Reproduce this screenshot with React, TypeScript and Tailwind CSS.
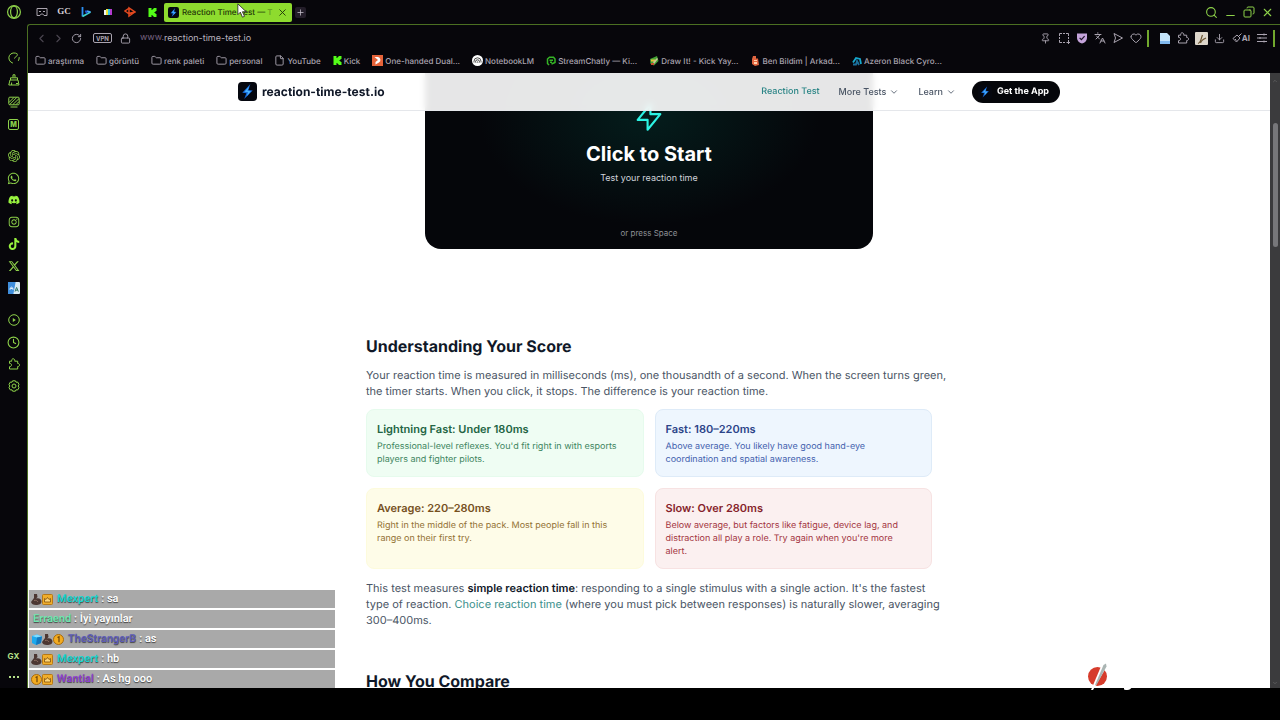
import type { ReactNode } from "react";
import {
  ChevronDown,
  ChevronLeft,
  ChevronRight,
  Clock,
  Copy,
  Download,
  File,
  Folder,
  Heart,
  Languages,
  Lock,
  Minus,
  Pin,
  Plus,
  RotateCw,
  Search,
  X,
} from "lucide-react";
import { FaDiscord, FaTiktok, FaWhatsapp, FaXTwitter, FaInstagram } from "react-icons/fa6";
import { SiKick, SiOpenai } from "react-icons/si";

function BoltLogo({ className }: { className: string }) {
  return (
    <svg viewBox="0 0 20 20" className={className} aria-hidden="true">
      <rect width="20" height="20" rx="4" fill="#05070f" />
      <path d="M13 2 4.5 11.2l4.300.6L6.500 18 15.500 9l-4.500-.7z" fill="#1668d8" />
      <path d="M11.8 4.6 6.800 10.2l3.800.6-1.600 4.400L13.600 9.800l-3.600-.5z" fill="#49b4ff" />
    </svg>
  );
}

function OperaIcon() {
  return (
    <svg viewBox="0 0 16 16" className="size-4" fill="none" stroke="#8ed24a" aria-hidden="true">
      <circle cx="8" cy="8" r="6.4" strokeWidth="1.2" />
      <ellipse cx="8" cy="8" rx="3.4" ry="5.8" strokeWidth="1.2" />
    </svg>
  );
}

function GaugeIcon() {
  return (
    <svg viewBox="0 0 12 12" className="size-3" fill="none" stroke="currentColor" strokeLinecap="round" aria-hidden="true">
      <path d="M4.500 11A5.200 5.200 0 1 1 9.300 2M11.200 5.500A5.200 5.200 0 0 1 10.500 8.500M6.400 6.200 9.600 3" />
    </svg>
  );
}

function CleanerIcon() {
  return (
    <svg viewBox="0 0 12 12" className="size-3" fill="none" stroke="currentColor" aria-hidden="true">
      <path d="M5 3.5V.8h2v2.7M2.5 6V3.8h7V6M2 6h8l1 5H.8zM3.600 8.500V11M8 9.500h2" />
    </svg>
  );
}

function WallpaperIcon() {
  return (
    <svg viewBox="0 0 12 12" className="size-3" fill="none" stroke="currentColor" aria-hidden="true">
      <rect x=".8" y="1.2" width="10.4" height="7.6" rx="1" />
      <path d="M1 6.5 6 1.4M1.6 8.6 8.8 1.4M4.8 8.6l6.2-6M8 8.6l3-3M2.500 11h7" />
    </svg>
  );
}

function ModsIcon() {
  return (
    <span className="flex size-[11px] items-center justify-center rounded-[2px] border border-[#8ed24a] text-[7px] leading-none font-extrabold">
      M
    </span>
  );
}

function TranslateTile() {
  return (
    <svg viewBox="0 0 12 12" className="size-3" aria-hidden="true">
      <rect width="12" height="12" rx="1" fill="#d8ebf4" />
      <path d="M0 0h7.6L5.4 12H0z" fill="#3f8edc" />
      <path d="M2 7.8c0-3.6 3-3.6 3 0M2.3 6.5h2.5" stroke="#e6f3ff" fill="none" />
      <path d="m7 9.6 1.6-4.2 1.8 4.2M7.6 8.2h2.2" stroke="#36786c" fill="none" />
    </svg>
  );
}

function PlayerIcon() {
  return (
    <svg viewBox="0 0 12 12" className="size-3" fill="none" stroke="currentColor" aria-hidden="true">
      <circle cx="6" cy="6" r="5.3" />
      <path d="M4.8 4v4l3-2z" fill="currentColor" stroke="none" />
    </svg>
  );
}

function PuzzleIcon() {
  return (
    <svg viewBox="0 0 12 12" className="size-3" fill="none" stroke="currentColor" strokeLinejoin="round" aria-hidden="true">
      <path d="M1.500 3.200h2.300C3.400 1.800 4 .8 5.200.8s1.900 1 1.500 2.400h3v2.300c1.200 0 1.900.6 1.900 1.500s-.7 1.500-1.900 1.500V11H1.500V8.700c1.300 0 2-.7 2-1.700s-.7-1.600-2-1.600z" />
    </svg>
  );
}

function SettingsIcon() {
  return (
    <svg viewBox="0 0 12 12" className="size-3" fill="none" stroke="currentColor" strokeLinejoin="round" aria-hidden="true">
      <path d="M4.6.8h2.8l.6 1.4 1.6-.2 1.4 2.3L10.2 6l.8 1.7L9.6 10 8 9.8l-.6 1.4H4.6L4 9.8 2.4 10 1 7.7 1.8 6 1 4.3 2.4 2l1.6.2z" />
      <circle cx="6" cy="6" r="2" />
    </svg>
  );
}

const sidebarGroups: { label: string; icon: ReactNode }[][] = [
  [
    { label: "GX Control", icon: <GaugeIcon /> },
    { label: "GX Cleaner", icon: <CleanerIcon /> },
    { label: "Live wallpapers", icon: <WallpaperIcon /> },
    { label: "Mods", icon: <ModsIcon /> },
  ],
  [
    { label: "ChatGPT", icon: <SiOpenai className="size-3" /> },
    { label: "WhatsApp", icon: <FaWhatsapp className="size-[13px]" /> },
    { label: "Discord", icon: <FaDiscord className="size-3 text-[#98f23f]" /> },
    { label: "Instagram", icon: <FaInstagram className="size-3" /> },
    { label: "TikTok", icon: <FaTiktok className="size-3 text-[#98f23f]" /> },
    { label: "X", icon: <FaXTwitter className="size-3" /> },
    { label: "Translate", icon: <TranslateTile /> },
  ],
  [
    { label: "Player", icon: <PlayerIcon /> },
    { label: "History", icon: <Clock className="size-[13px]" /> },
    { label: "Extensions", icon: <PuzzleIcon /> },
    { label: "Settings", icon: <SettingsIcon /> },
  ],
];

function SideBar() {
  return (
    <aside className="flex w-[27px] shrink-0 flex-col text-[#8ed24a]">
      <button aria-label="Opera menu" className="mb-[23px] flex h-6 items-center justify-center">
        <OperaIcon />
      </button>
      <nav className="flex flex-col gap-[10px]">
        {sidebarGroups.map((group, i) => (
          <div key={i} className="flex flex-col">
            {group.map(({ label, icon }) => (
              <button key={label} aria-label={label} className="flex h-[22px] items-center justify-center">
                {icon}
              </button>
            ))}
          </div>
        ))}
      </nav>
      <div className="mt-auto flex flex-col text-[#b5e08a]">
        <button className="h-5 text-[8px] font-bold">GX</button>
        <button aria-label="More" className="flex h-[22px] items-center justify-center gap-[2px]">
          <span className="size-[2px] bg-current" />
          <span className="size-[2px] bg-current" />
          <span className="size-[2px] bg-current" />
        </button>
      </div>
    </aside>
  );
}

const pinnedTabs: { label: string; icon: ReactNode }[] = [
  {
    label: "GX Corner",
    icon: (
      <svg viewBox="0 0 12 10" className="h-[10px] w-3" fill="none" stroke="#a9a3ad" aria-hidden="true">
        <path d="M1 1.5h10v7H8L6.8 7H5.2L4 8.5H1zM3 4.5h2M7 4.5h2" />
      </svg>
    ),
  },
  { label: "GC", icon: <span className="font-['Liberation_Serif',serif] text-[9px] font-bold text-[#d6d2d8]">GC</span> },
  {
    label: "Play",
    icon: (
      <svg viewBox="0 0 12 12" className="size-3" fill="none" strokeWidth="1.800" aria-hidden="true">
        <path d="M2.500 1v9.500" stroke="#2c8ff2" />
        <path d="M2.500 10.500 10.500 6" stroke="#3dd2c5" />
        <path d="m5.500 4.500 1.500 3" stroke="#2454d0" />
        <path d="m7 5 3.500 1" stroke="#43a5ff" />
      </svg>
    ),
  },
  {
    label: "Stripes",
    icon: (
      <svg viewBox="0 0 8 6" className="h-[6px] w-2" aria-hidden="true">
        <path d="M0 1h2v5H0z" fill="#f2f2f2" />
        <path d="M2 0h2v6H2z" fill="#ece33a" />
        <path d="M4 0h2v6H4z" fill="#33c7e8" />
        <path d="M6 0h2v6H6z" fill="#b43ad0" />
      </svg>
    ),
  },
  {
    label: "Radio",
    icon: (
      <svg viewBox="0 0 12 12" className="size-3" fill="none" stroke="#e2481f" strokeWidth="1.500" aria-hidden="true">
        <path d="M4.500 2.500 1 5l3.500 2.500L11 6 5 2v8l6-4" />
      </svg>
    ),
  },
  { label: "Kick", icon: <SiKick className="size-[9px] text-[#53fc18]" /> },
];

function TabBar() {
  return (
    <div className="flex h-6 items-center pl-1">
      {pinnedTabs.map(({ label, icon }) => (
        <button key={label} aria-label={label} className="flex w-[22px] items-center justify-center">
          {icon}
        </button>
      ))}
      <div className="ml-[1px] flex h-[19px] w-32 items-center rounded-[2px] bg-[#8edb2e] px-1 text-[#1f3508]">
        <BoltLogo className="size-[11px] shrink-0" />
        <span className="ml-[3px] text-[8px] font-medium whitespace-nowrap">
          Reaction Time Test — <span className="opacity-40">T</span>
        </span>
        <button aria-label="Close tab" className="ml-auto">
          <X className="size-[11px]" />
        </button>
      </div>
      <button aria-label="New tab" className="ml-[3px] flex size-[11px] items-center justify-center rounded-[2px] bg-[#231d29] text-[#c9c3cf]">
        <Plus className="size-[9px]" />
      </button>
      <div className="ml-auto flex items-center gap-[6px] pr-[6px] text-[#8ed24a]">
        <button aria-label="Search tabs"><Search className="size-[13px]" /></button>
        <button aria-label="Minimize" className="pt-[7px]"><Minus className="size-[13px]" /></button>
        <button aria-label="Restore"><Copy className="size-3 -scale-x-100" /></button>
        <button aria-label="Close window"><X className="size-[13px]" /></button>
      </div>
    </div>
  );
}

function ShieldIcon() {
  return (
    <svg viewBox="0 0 12 12" className="size-3" aria-hidden="true">
      <path d="M1 1.5h10V6c0 2.6-2 4.6-5 5.6C3 10.600 1 8.600 1 6z" fill="#c4a3da" />
      <path d="m3.600 5.800 1.800 1.800 3.200-3.400" fill="none" stroke="#1c1226" strokeWidth="1.200" />
    </svg>
  );
}

function SnapshotIcon() {
  return (
    <svg viewBox="0 0 12 12" className="size-3" fill="none" stroke="currentColor" aria-hidden="true">
      <path d="M1.500 4V1.500H4M5 1.500h2M8 1.500h2.500V4M1.500 5v2M1.500 8v2.500H4M5 10.500h2M10.500 5v2M10.500 8v4M8.500 10.500H12" />
    </svg>
  );
}

function SendIcon() {
  return (
    <svg viewBox="0 0 12 12" className="size-3" fill="none" stroke="currentColor" strokeLinejoin="round" aria-hidden="true">
      <path d="m2 1.500 8.500 4.500L2 10.500 3.500 6z" />
    </svg>
  );
}

const toolbarActions: { label: string; icon: ReactNode }[] = [
  { label: "Pin", icon: <Pin className="size-[11px]" /> },
  { label: "Snapshot", icon: <SnapshotIcon /> },
  { label: "Ad blocker", icon: <ShieldIcon /> },
  { label: "Translate", icon: <Languages className="size-3" /> },
  { label: "Send to Flow", icon: <SendIcon /> },
  { label: "Bookmark", icon: <Heart className="size-3" /> },
];

const extensionActions: { label: string; icon: ReactNode; width: string }[] = [
  {
    label: "Docs",
    width: "w-[18px]",
    icon: (
      <svg viewBox="0 0 10 11" className="h-[11px] w-[10px]" aria-hidden="true">
        <path d="M0 0h7l3 3v8H0z" fill="#c4e4fa" />
        <path d="M0 8h10v3H0z" fill="#80b9ee" />
      </svg>
    ),
  },
  { label: "Extensions", width: "w-[18px]", icon: <PuzzleIcon /> },
  {
    label: "Profile",
    width: "w-[19px]",
    icon: (
      <svg viewBox="0 0 13 13" className="size-[13px]" aria-hidden="true">
        <rect width="13" height="13" rx="1" fill="#ddd6cb" />
        <path d="M3 11.500c3-1 3-5 4.500-8.500M5.500 11c1-3 3-4 5.500-5" fill="none" stroke="#6a5431" strokeWidth="1.200" />
      </svg>
    ),
  },
  { label: "Downloads", width: "w-[18px]", icon: <Download className="size-[11px]" /> },
];

function AddressBar() {
  return (
    <div className="flex h-[26px] items-center pl-[7px] text-[#aaa4b0]">
      <button aria-label="Back" className="text-[#4b4650]"><ChevronLeft className="size-[13px]" /></button>
      <button aria-label="Forward" className="ml-1 text-[#4b4650]"><ChevronRight className="size-[13px]" /></button>
      <button aria-label="Reload" className="ml-[6px]"><RotateCw className="size-[11px]" /></button>
      <button className="ml-[11px] flex h-[10px] items-center rounded-[2px] border border-current px-[2px] text-[6px] font-bold">
        VPN
      </button>
      <button aria-label="Site information" className="ml-[8px]"><Lock className="size-[11px]" /></button>
      <label className="ml-[9px] flex flex-1 items-center text-[9px]">
        <span className="text-[#75617f]">www.</span>
        <input
          aria-label="Address"
          defaultValue="reaction-time-test.io"
          className="w-full bg-transparent text-[#b9b3bf] outline-none"
        />
      </label>
      <div className="flex items-center">
        {toolbarActions.map(({ label, icon }) => (
          <button key={label} aria-label={label} className="flex w-[18px] items-center justify-center">
            {icon}
          </button>
        ))}
        <span className="mr-[7px] ml-[2px] h-[17px] w-[2px] bg-[#71a82e]" />
        {extensionActions.map(({ label, icon, width }) => (
          <button key={label} aria-label={label} className={`flex items-center justify-center ${width}`}>
            {icon}
          </button>
        ))}
        <button className="ml-[3px] flex items-center text-[8px] font-bold">
          <svg viewBox="0 0 10 10" className="size-[10px]" fill="none" stroke="currentColor" aria-hidden="true">
            <path d="M1 5.500 5 2l3 3-3.500 4zM6.500 3.500l3-3M3 6l1.500 1.500" />
          </svg>
          AI
        </button>
        <button aria-label="Easy setup" className="ml-[7px]">
          <svg viewBox="0 0 10 10" className="size-[10px]" fill="none" stroke="currentColor" aria-hidden="true">
            <path d="M0 1.500h10M0 5h10M0 8.500h10M7 .500v2M3 4v2M7 7.500v2" />
          </svg>
        </button>
        <span className="mr-[5px] ml-[6px] h-[17px] w-[2px] bg-[#71a82e]" />
      </div>
    </div>
  );
}

const folder = <Folder className="size-[11px]" />;

const bookmarks: { label: string; icon: ReactNode }[] = [
  { label: "araştırma", icon: folder },
  { label: "görüntü", icon: folder },
  { label: "renk paleti", icon: folder },
  { label: "personal", icon: folder },
  { label: "YouTube", icon: <File className="size-[11px]" /> },
  { label: "Kick", icon: <SiKick className="size-[9px] text-[#53fc18]" /> },
  {
    label: "One-handed Dual...",
    icon: (
      <svg viewBox="0 0 11 11" className="size-[11px]" aria-hidden="true">
        <rect width="11" height="11" fill="#e5633a" />
        <path d="M2.500 2H6a3 3 0 0 1 1 5.500L3.500 9.500V7L6 5z" fill="#fff" />
      </svg>
    ),
  },
  {
    label: "NotebookLM",
    icon: (
      <svg viewBox="0 0 11 11" className="size-[11px]" fill="none" stroke="#222" strokeWidth=".800" aria-hidden="true">
        <circle cx="5.500" cy="5.500" r="5.500" fill="#fff" stroke="none" />
        <path d="M2 7.500V6.300a3.500 3.500 0 0 1 7 0v1.200M3.500 7.500V6.800a2 2 0 0 1 4 0v.7M5 7.500c0-1 1-1 1 0" />
      </svg>
    ),
  },
  {
    label: "StreamChatly — Ki...",
    icon: (
      <svg viewBox="0 0 10 10" className="size-[10px]" fill="none" stroke="#35b526" strokeWidth="1.500" aria-hidden="true">
        <path d="M3 9 1.500 7.500V3L3.500 1.200h4L9 3v3.500L5.500 8M3.500 4.200h3.500M4 6.200h2" />
      </svg>
    ),
  },
  {
    label: "Draw It! - Kick Yay...",
    icon: (
      <svg viewBox="0 0 10 10" className="size-[10px]" aria-hidden="true">
        <path d="M1 3 8 0l1.500 5L5 9.500 1.500 8z" fill="#43a233" />
        <path d="M2 3.500h4v2H2z" fill="#e5c33a" />
        <path d="m4 6 4-4 1 1-4 5z" fill="#c9c59a" />
        <path d="M2 7h3v2H2z" fill="#c65030" />
      </svg>
    ),
  },
  {
    label: "Ben Bildim | Arkad...",
    icon: (
      <svg viewBox="0 0 10 10" className="size-[10px]" aria-hidden="true">
        <path d="M3 0h3v2.500h2L9 9 5 10 2 8V3z" fill="#e06540" />
        <path d="M4 4h3v1H4zM4 6h3v2H4z" fill="#ffd2ae" />
      </svg>
    ),
  },
  {
    label: "Azeron Black Cyro...",
    icon: (
      <svg viewBox="0 0 10 10" className="size-[10px]" fill="none" strokeWidth="1.800" aria-hidden="true">
        <path d="M1 6.500 4 2l4 1 1 5" stroke="#16a7cc" />
        <path d="M1 8.500h3L5 5l2 4" stroke="#1c6f9c" />
      </svg>
    ),
  },
];

function BookmarksBar() {
  return (
    <nav aria-label="Bookmarks" className="flex h-[22px] items-center gap-3 pb-[3px] pl-[7px] text-[8px] font-medium text-[#aaa4b0]">
      {bookmarks.map(({ label, icon }) => (
        <a key={label} href="#" className="flex items-center gap-[2px] whitespace-nowrap">
          {icon}
          {label}
        </a>
      ))}
    </nav>
  );
}

function SiteHeader() {
  return (
    <header className="sticky top-0 z-10 -mb-[38px] border-b border-gray-200 bg-white/90 backdrop-blur-[3px]">
      <div className="mx-auto flex h-[37px] max-w-[822px] items-center justify-between">
        <a href="#" className="flex items-center gap-[5px] text-[12px] font-bold text-gray-900">
          <BoltLogo className="size-[19px]" />
          reaction-time-test.io
        </a>
        <nav className="flex items-center text-[9px] font-medium text-gray-600">
          <a href="#" className="text-[#2a8586]">Reaction Test</a>
          <button className="ml-[19px] flex items-center gap-[3px]">
            More Tests <ChevronDown className="size-[10px]" />
          </button>
          <button className="ml-[19px] flex items-center gap-[3px]">
            Learn <ChevronDown className="size-[10px]" />
          </button>
          <a href="#" className="ml-4 flex h-[22px] items-center gap-[5px] rounded-full bg-[#05060a] pr-[11px] pl-[6px] font-bold text-white">
            <BoltLogo className="size-[14px]" />
            Get the App
          </a>
        </nav>
      </div>
    </header>
  );
}

function StartPanel() {
  return (
    <button className="mx-auto -mt-10 flex h-[216px] w-full max-w-[448px] shrink-0 flex-col items-center rounded-2xl bg-[#05060a] bg-[radial-gradient(ellipse_170px_110px_at_50%_38%,#041d1c,transparent)] pt-[67px]">
      <svg viewBox="0 0 24 24" className="size-[34px] shrink-0" fill="none" stroke="#2cf3e3" strokeWidth="1.500" strokeLinejoin="round" aria-hidden="true">
        <path d="M13 10V3L4 14h7v7l9-11h-7z" />
      </svg>
      <span className="mt-[6px] text-[20px] leading-7 font-bold text-white">Click to Start</span>
      <span className="mt-[3px] text-[9px] leading-[14px] text-gray-300">Test your reaction time</span>
      <span className="mt-auto mb-[10px] text-[8px] leading-3 text-[#8d9095]">or press Space</span>
    </button>
  );
}

const scores = [
  {
    title: "Lightning Fast: Under 180ms",
    text: "Professional-level reflexes. You'd fit right in with esports players and fighter pilots.",
    box: "border-[#e6fbed] bg-[#effdf3]",
    titleColor: "text-[#236544]",
    textColor: "text-[#3d8560]",
  },
  {
    title: "Fast: 180–220ms",
    text: "Above average. You likely have good hand-eye coordination and spatial awareness.",
    box: "border-[#deebf8] bg-[#eef6fe]",
    titleColor: "text-[#2c4489]",
    textColor: "text-[#4462ae]",
  },
  {
    title: "Average: 220–280ms",
    text: "Right in the middle of the pack. Most people fall in this range on their first try.",
    box: "border-[#fdfbdc] bg-[#fefce8]",
    titleColor: "text-[#76501e]",
    textColor: "text-[#937234]",
  },
  {
    title: "Slow: Over 280ms",
    text: "Below average, but factors like fatigue, device lag, and distraction all play a role. Try again when you're more alert.",
    box: "border-[#f7e2e2] bg-[#fbf0f0]",
    titleColor: "text-[#861f2b]",
    textColor: "text-[#a33541]",
  },
];

function Article() {
  return (
    <article className="mx-auto mt-[85px] w-full max-w-[566px] shrink-0 text-[11px] leading-4 text-gray-600">
      <h2 className="text-[16px] leading-6 font-bold text-gray-900">Understanding Your Score</h2>
      <p className="-mr-4 mt-[9px]">
        Your reaction time is measured in milliseconds (ms), one thousandth of a second. When the screen turns green,
        the timer starts. When you click, it stops. The difference is your reaction time.
      </p>
      <div className="mt-[10px] grid grid-cols-2 gap-[11px]">
        {scores.map(({ title, text, box, titleColor, textColor }) => (
          <section key={title} className={`rounded-lg border py-[10px] pr-4 pl-[10px] ${box}`}>
            <h3 className={`font-semibold ${titleColor} leading-[18px]`}>{title}</h3>
            <p className={`mt-[2px] text-[9px] leading-[13px] ${textColor}`}>{text}</p>
          </section>
        ))}
      </div>
      <p className="-mr-4 mt-[11px]">
        This test measures <strong className="font-semibold text-gray-900">simple reaction time</strong>: responding to
        a single stimulus with a single action. It's the fastest type of reaction.{" "}
        <a href="#" className="text-[#3a8f8c]">Choice reaction time</a> (where you must pick between responses) is
        naturally slower, averaging 300–400ms.
      </p>
      <h2 className="mt-[41px] text-[16px] leading-6 font-bold text-gray-900">How You Compare</h2>
    </article>
  );
}

function ArmBadge() {
  return (
    <svg viewBox="0 0 11 11" className="size-[11px]" aria-hidden="true">
      <path d="M3 0h3l.500 3L5 4.500C8 3.500 10.500 5 10.500 7.500S8 11 5 11 .500 10 0 8l3-4z" fill="#4c3732" />
      <path d="M3 6.500c2-.5 3 0 4 1.500" fill="none" stroke="#8b6b5e" />
    </svg>
  );
}

function CrownBadge() {
  return (
    <svg viewBox="0 0 11 11" className="size-[11px]" aria-hidden="true">
      <rect x=".500" y=".500" width="10" height="10" rx="1" fill="#f0ae2b" stroke="#b77815" />
      <path d="m2.500 4.500 1.500 1 1.500-2 1.500 2 1.500-1V8h-6z" fill="#ffd778" stroke="#7d4e10" strokeWidth=".800" />
    </svg>
  );
}

function CoinBadge() {
  return (
    <svg viewBox="0 0 11 11" className="size-[11px]" aria-hidden="true">
      <circle cx="5.500" cy="5.500" r="5" fill="#f3ac20" stroke="#a96b0d" />
      <path d="M4.500 3.500 6 2.800v5.400" fill="none" stroke="#6f450a" strokeWidth="1.200" />
    </svg>
  );
}

function CubeBadge() {
  return (
    <svg viewBox="0 0 11 11" className="size-[11px]" aria-hidden="true">
      <path d="m1 2 5-1.500 5 2L10 9l-5 2-4-2z" fill="#1ca9ee" />
      <path d="m1 2 5 1.500 5-1L6 .500z" fill="#7fdcff" />
      <path d="M6 3.500 5 11l5-2 1-6.500z" fill="#1477bd" />
    </svg>
  );
}

const messages: { name: string; color: string; text: string; badges: ReactNode }[] = [
  { name: "Mexpert", color: "text-[#18d5d0]", text: "sa", badges: <><ArmBadge /><CrownBadge /></> },
  { name: "Erraend", color: "text-[#6fe8b0]", text: "İyi yayınlar", badges: null },
  { name: "TheStrangerB", color: "text-[#5e5cb8]", text: "as", badges: <><CubeBadge /><ArmBadge /><CoinBadge /></> },
  { name: "Mexpert", color: "text-[#18d5d0]", text: "hb", badges: <><ArmBadge /><CrownBadge /></> },
  { name: "Wantial", color: "text-[#9140cf]", text: "As hg ooo", badges: <><CoinBadge /><CrownBadge /></> },
];

function ChatOverlay() {
  return (
    <ul className="absolute bottom-0 left-0 z-20 flex w-[307px] flex-col gap-[2px] bg-white pl-[1px] font-['Roboto',sans-serif] text-[11px] font-semibold text-white">
      {messages.map(({ name, color, text, badges }, i) => (
        <li key={i} className="flex h-[18px] items-center bg-[#a9a9a9] pl-[2px] text-shadow-[0_1px_1px_#444]">
          {badges && <span className="mr-[2px] flex">{badges}</span>}
          <span className={`ml-[2px] ${color}`}>{name}</span>
          <span className="ml-[3px]">: {text}</span>
        </li>
      ))}
    </ul>
  );
}

function Watermark() {
  return (
    <svg viewBox="0 0 48 30" className="absolute right-[147px] -bottom-[3px] z-20 h-[30px] w-12" aria-hidden="true">
      <circle cx="12.500" cy="15.500" r="9.500" fill="#d63c2c" />
      <path d="M6 29 17 3l5 2L8 29z" fill="#fff" />
      <path d="m10 24 8.500-20L21 2.500l.500 3L11.500 24z" fill="#aab5b3" />
      <path d="M39 26h8c-1 2-3 4-8 2.500z" fill="#fff" />
    </svg>
  );
}

function ScrollBar() {
  return (
    <div className="flex w-[10px] shrink-0 flex-col items-center bg-[#3b3b3d]">
      <span className="mt-[5px] text-[#777]"><ChevronDown className="size-[6px] rotate-180" /></span>
      <span className="mt-[39px] h-[124px] w-[5px] rounded-full bg-[#77777a]" />
      <span className="mt-auto mb-[2px] text-[#777]"><ChevronDown className="size-[6px]" /></span>
    </div>
  );
}

function Cursor() {
  return (
    <svg viewBox="0 0 12 18" className="pointer-events-none absolute top-[3px] left-[237px] h-[15px] w-[10px]" aria-hidden="true">
      <path d="M1 1v13l3-3 2.500 6 2.500-1-2.500-5.500H11z" fill="#fff" stroke="#222" />
    </svg>
  );
}

function App() {
  return (
    <div className="relative flex h-screen flex-col overflow-hidden bg-black pb-8 font-['Inter',sans-serif] [text-rendering:geometricPrecision]">
      <div className="flex min-h-0 flex-1 bg-[#07060b]">
        <SideBar />
        <div className="flex min-w-0 flex-1 flex-col">
          <TabBar />
          <div className="flex min-h-0 flex-1 flex-col rounded-tl-[3px] border-t border-l border-[#4b6f22]">
            <AddressBar />
            <BookmarksBar />
            <div className="relative flex min-h-0 flex-1">
              <main className="flex min-w-0 flex-1 flex-col overflow-hidden bg-white">
                <SiteHeader />
                <StartPanel />
                <Article />
              </main>
              <ScrollBar />
              <ChatOverlay />
              <Watermark />
            </div>
          </div>
        </div>
      </div>
      <Cursor />
    </div>
  );
}

export default App;
